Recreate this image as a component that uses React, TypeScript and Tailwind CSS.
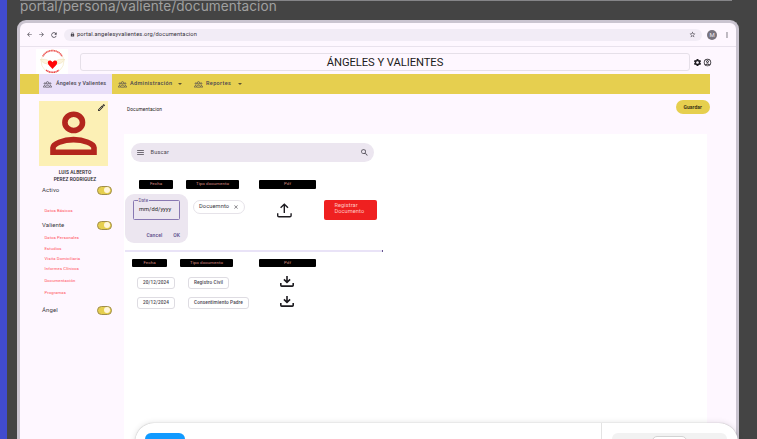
import type { ReactNode } from "react";
import {
  MdArrowBack,
  MdArrowForward,
  MdClose,
  MdLock,
  MdMenu,
  MdMoreVert,
  MdOutlineAccountCircle,
  MdOutlineEdit,
  MdRefresh,
  MdSearch,
  MdSettings,
  MdStarBorder,
} from "react-icons/md";

function Toggle() {
  return (
    <span className="flex h-[9px] w-[15px] items-center justify-end rounded-full border border-[#a08d4c] bg-[#e6cf4f] pr-px">
      <span className="h-[6px] w-[6px] rounded-full bg-[#fff6dc]" />
    </span>
  );
}

function Section({ label, className }: { label: string; className: string }) {
  return (
    <div className={`flex h-[10px] w-[70px] items-center justify-between text-[6px] tracking-[0.1px] text-[#3a383d] ${className}`}>
      <span>{label}</span>
      <Toggle />
    </div>
  );
}

function SideLink({ children, className }: { children: ReactNode; className: string }) {
  return (
    <a className={`ml-[2.5px] block h-[8px] text-[4.2px] leading-[8px] tracking-[0.11px] whitespace-nowrap text-[#ff4f58] ${className}`}>
      {children}
    </a>
  );
}

function HeadCell({ children, className }: { children: ReactNode; className: string }) {
  return (
    <div className={`flex h-[8.5px] shrink-0 items-center justify-center rounded-[1px] bg-black text-[4.4px] tracking-[0.08px] text-[#d98a80] ${className}`}>
      {children}
    </div>
  );
}

function Chip({ children, className }: { children: ReactNode; className: string }) {
  return (
    <div className={`flex h-[12px] shrink-0 items-center justify-center rounded-[3px] border border-[#dedce2] text-[4.7px] font-medium tracking-[0.11px] whitespace-nowrap text-[#49454f] ${className}`}>
      {children}
    </div>
  );
}

function GroupIcon({ className }: { className: string }) {
  return (
    <svg viewBox="0 0 18 14" className={`h-[7px] w-[9px] shrink-0 ${className}`} fill="none" stroke="#49454f" strokeWidth="1.4">
      <circle cx="9" cy="3.6" r="2.3" />
      <path d="M4.9 12.3v-1.6C4.9 9.2 7 8.3 9 8.3s4.1.9 4.1 2.4v1.6Z" />
      <circle cx="3.8" cy="5" r="1.5" />
      <circle cx="14.2" cy="5" r="1.5" />
      <path d="M3.6 12.3H1v-1.5C1 9.6 2.3 9 3.9 9M14.4 12.3H17v-1.5C17 9.6 15.7 9 14.1 9" />
    </svg>
  );
}

function Caret({ className }: { className: string }) {
  return (
    <svg viewBox="0 0 4 2" className={`h-[2px] w-[4px] shrink-0 ${className}`} fill="#5c532f">
      <path d="M0 0h4L2 2Z" />
    </svg>
  );
}

function DownloadIcon({ className }: { className: string }) {
  return (
    <svg viewBox="0 0 14 11" className={`h-[11px] w-[14px] shrink-0 ${className}`} fill="none" stroke="#1d1b20" strokeWidth="1.6">
      <path d="M7 0v6M3.9 3.4l3.1 2.9 3.1-2.9M.8 7v2.2q0 .9.9.9h10.6q.9 0 .9-.9V7" />
    </svg>
  );
}

function Logo() {
  return (
    <div className="ml-[16px] mt-[2px] h-[25px] w-[32px] bg-white">
      <svg viewBox="0 0 32 25" className="h-full w-full" fill="none">
        <circle cx="16.5" cy="12.5" r="11.3" stroke="#f4e9c5" strokeWidth=".7" />
        <path d="M6.8 7.4A11 11 0 0 1 26.2 7.4" stroke="#ed5255" strokeWidth="1.6" strokeDasharray="1.2 .45" />
        <path d="M10.1 21.2A11 11 0 0 0 22.9 21.2" stroke="#ed4248" strokeWidth="1.6" strokeDasharray="1.2 .4" />
        <path d="M15 12.6Q9 9 4 10.5Q7 15 13 15.5M18 12.6Q24 9 29 10.5Q26 15 20 15.5" fill="#fbf4df" stroke="#eedfb4" strokeWidth=".5" />
        <path d="M16.5 20C14.5 17.8 11.8 16 11.8 13.8C11.8 11 15.2 10.9 16.5 13.3C17.8 10.9 21.2 11 21.2 13.8C21.2 16 18.5 17.8 16.5 20Z" fill="#ff0508" />
      </svg>
    </div>
  );
}

function BrowserBar() {
  return (
    <div className="flex h-[24px] shrink-0 items-center border-b border-[#e9e2ed] text-[#49454f]">
      <MdArrowBack className="ml-[6px] h-[7px] w-[7px]" />
      <MdArrowForward className="ml-[5px] h-[7px] w-[7px]" />
      <MdRefresh className="ml-[5px] h-[8px] w-[8px]" />
      <div className="ml-[6px] flex h-[12px] w-[638px] items-center rounded-full bg-[#f2ecf6]">
        <MdLock className="ml-[5.5px] h-[5px] w-[5px]" />
        <span className="ml-[2.5px] text-[5.7px] tracking-[0.17px] whitespace-nowrap text-[#333036]">portal.angelesyvalientes.org/documentacion</span>
        <MdStarBorder className="mr-[6px] ml-auto h-[7px] w-[7px]" />
      </div>
      <span className="ml-[5px] flex h-[10px] w-[10px] items-center justify-center rounded-full bg-[#79747e] text-[6px] text-[#eee8f2]">M</span>
      <MdMoreVert className="ml-[10px] h-[8px] w-[8px] -translate-x-[4px]" />
    </div>
  );
}

function Header() {
  return (
    <header className="flex h-[27px] shrink-0">
      <Logo />
      <div className="mt-[6px] ml-[12px] flex h-[18px] w-[610px] items-center justify-center rounded-[3px] border border-[#e6e0e9] pt-px text-[11.2px] leading-none text-[#1d1b20]">
        <span className="-tracking-[0.05px]">ÁNGELES Y VALIENTES</span>
      </div>
      <div className="mt-[10.5px] ml-[2.5px] flex gap-[1.5px] text-[#1d1b20]">
        <MdSettings className="h-[9px] w-[9px]" />
        <MdOutlineAccountCircle className="h-[9px] w-[9px]" />
      </div>
    </header>
  );
}

function Nav() {
  return (
    <nav className="flex h-[20px] w-[690px] shrink-0 items-center bg-[#e6cf4f] pl-[19px] text-[5.5px] font-medium tracking-[0.36px] whitespace-nowrap text-[#49454f]">
      <div className="flex h-full w-[73px] items-center bg-[#e8def8]">
        <GroupIcon className="ml-[4px]" />
        <span className="ml-[4px] text-[5.4px] tracking-[0.16px]">Ángeles y Valientes</span>
      </div>
      <GroupIcon className="ml-[5.5px]" />
      <span className="ml-[3.5px] w-[46px]">Administración</span>
      <Caret className="ml-[1.5px]" />
      <GroupIcon className="ml-[12px]" />
      <span className="ml-[3.5px] w-[30px]">Reportes</span>
      <Caret className="ml-[1.5px]" />
    </nav>
  );
}

function Sidebar() {
  return (
    <aside className="w-[104px] shrink-0 pt-[7px] pl-[19px]">
      <div className="relative h-[65px] w-[69px] bg-[#fcf0b5]">
        <svg viewBox="0 0 69 65" className="h-full w-full" fill="none" stroke="#b3261e" strokeWidth="5.6">
          <ellipse cx="34.7" cy="21.4" rx="8.8" ry="8.1" />
          <path d="M14 51.2V46.5C14 43 24 38.6 34.5 38.6S55 43 55 46.5V51.2Z" />
        </svg>
        <MdOutlineEdit className="absolute top-[2px] right-[2px] h-[9px] w-[9px] text-[#1d1b20]" />
      </div>
      <p className="mt-[3px] w-[72px] text-center text-[4.8px] leading-[7px] font-semibold tracking-[0.07px] text-[#333036]">
        LUIS ALBERTO
        <br />
        PEREZ RODRIGUEZ
      </p>
      <div className="pl-[3px]">
        <Section label="Activo" className="mt-[2px]" />
        <SideLink className="mt-[12px]">Datos Básicos</SideLink>
        <Section label="Valiente" className="mt-[5px]" />
        <SideLink className="mt-[4px]">Datos Personales</SideLink>
        <SideLink className="mt-[3px]">Estudios</SideLink>
        <SideLink className="mt-[2px]">Visita Domiciliaria</SideLink>
        <SideLink className="mt-[2px]">Informes Clínicos</SideLink>
        <SideLink className="mt-[4px]">Documentación</SideLink>
        <SideLink className="mt-[4px]">Programas</SideLink>
        <Section label="Ángel" className="mt-[8px]" />
      </div>
    </aside>
  );
}

function DateCard() {
  return (
    <div className="ml-px h-[49px] w-[63px] shrink-0 rounded-[9px] bg-[#ece6f0] pt-[6px] pl-[8px]">
      <div className="relative flex h-[20px] w-[47px] items-center rounded-[1.5px] border border-[#8878b2] pl-[5px] text-[5.7px] leading-none text-[#1d1b20]">
        <span className="absolute -top-[3px] left-[3.5px] bg-[#ece6f0] px-[1px] text-[4.5px] leading-[5px] tracking-[0.1px] text-[#65558f]">Date</span>
        <span className="tracking-[0.05px]">mm/dd/yyyy</span>
      </div>
      <div className="mt-[11px] flex justify-end pr-[8px] text-[5px] leading-[8px] font-semibold tracking-[0.06px] text-[#65558f]">
        <span className="mr-[11px]">Cancel</span>
        <span>OK</span>
      </div>
    </div>
  );
}

function Documents() {
  return (
    <section className="flex w-[583px] flex-1 flex-col bg-white">
      <div className="mt-[9px] ml-[7px] flex h-[19px] w-[243px] shrink-0 items-center rounded-full bg-[#ece6f0] text-[#49454f]">
        <MdMenu className="ml-[5px] h-[9px] w-[9px]" />
        <span className="ml-[5.5px] text-[5.6px] tracking-[0.2px]">Buscar</span>
        <MdSearch className="mr-[5px] ml-auto h-[9px] w-[9px]" />
      </div>

      <div className="mt-[18px] flex h-[8px] shrink-0 pl-[15px]">
        <HeadCell className="w-[34px]">Fecha</HeadCell>
        <HeadCell className="ml-[13px] w-[53px]">Tipo documento</HeadCell>
        <HeadCell className="ml-[20px] w-[57px]">Pdf</HeadCell>
      </div>

      <div className="mt-[6px] flex h-[49px] shrink-0">
        <DateCard />
        <div className="mt-[6px] ml-[5px] flex h-[14px] w-[52px] items-center rounded-full border border-[#e6e3e9] pl-[5px] text-[5.7px] text-[#3a373e]">
          <span className="w-[34px] tracking-[0.1px]">Docuemnto</span>
          <MdClose className="h-[6px] w-[6px] shrink-0" />
        </div>
        <svg viewBox="0 0 15 15" className="mt-[9px] ml-[32px] h-[15px] w-[15px] shrink-0" fill="none" stroke="#1d1b20" strokeWidth="1.4">
          <path d="M7.3 10V1.2M3.6 4.8L7.3 1.2L11 4.8M.7 10.2v2.4q0 1.2 1.2 1.2h11q1.2 0 1.2-1.2v-2.4" />
        </svg>
        <button className="mt-[6px] ml-[32px] h-[19.5px] w-[53px] rounded-[2px] bg-[#ef2020] pt-[2px] pl-[10.5px] text-left align-top text-[5.6px] leading-[5.5px] tracking-[0.1px] text-[#ffc7c2]">
          <span className="block h-[15.5px]">
            Registrar
            <br />
            Documento
          </span>
        </button>
      </div>

      <div className="mt-[7px] ml-px flex h-[2px] w-[258px] shrink-0 justify-end bg-[#e9e3f7]">
        <span className="h-[2px] w-[1.5px] bg-[#65558f]" />
      </div>

      <div className="mt-[6.5px] flex h-[8.5px] shrink-0 pl-[8px]">
        <HeadCell className="w-[35px]">Fecha</HeadCell>
        <HeadCell className="ml-[13px] w-[53px]">Tipo documento</HeadCell>
        <HeadCell className="ml-[26px] w-[57px]">Pdf</HeadCell>
      </div>

      <div className="mt-[10px] flex h-[12px] shrink-0 pl-[13px]">
        <Chip className="w-[38px]">20/12/2024</Chip>
        <Chip className="ml-[13px] w-[41px]">Registro Civil</Chip>
        <DownloadIcon className="-mt-[1px] ml-[50.5px]" />
      </div>
      <div className="mt-[8px] flex h-[12px] shrink-0 pl-[13px]">
        <Chip className="w-[38px]">20/12/2024</Chip>
        <Chip className="ml-[13px] w-[61px]">Consentimiento Padre</Chip>
        <DownloadIcon className="-mt-[1px] ml-[31px]" />
      </div>
    </section>
  );
}

export default function App() {
  return (
    <div className="relative flex h-[439px] w-[757px] overflow-hidden bg-[#444444] font-['Roboto','Liberation_Sans',sans-serif] leading-none">
      <div className="w-[7px] shrink-0 bg-[#414bcf]" />
      <div className="flex flex-col pl-[10px]">
        <div className="ml-[3px] h-[20px] w-[712px] shrink-0 border-t border-[#858588]">
          <h1 className="font-['Inter','Liberation_Sans',sans-serif] text-[13.6px] leading-[10px] whitespace-nowrap text-[#a0a0a0]">
            <span className="tracking-[0.08px]">portal/persona/valiente/documentacion</span>
          </h1>
        </div>
        <div className="flex h-[440px] w-[722px] flex-col overflow-hidden rounded-t-[9px] border-[3px] border-b-0 border-[#cac4d0] bg-[#fef7ff]">
          <BrowserBar />
          <Header />
          <Nav />
          <div className="flex min-h-0 flex-1">
            <Sidebar />
            <main className="flex flex-1 flex-col">
              <div className="flex h-[40px] w-[586px] shrink-0 items-start justify-between pt-[6px] pl-[3px]">
                <h2 className="mt-[7px] text-[4.8px] leading-[6px] tracking-[0.11px] text-[#1d1b20]">Documentacion</h2>
                <button className="h-[14px] w-[34.5px] rounded-full bg-[#e6cf4f] text-[5px] font-bold tracking-[0.06px] text-[#3f3816]">Guardar</button>
              </div>
              <Documents />
            </main>
          </div>
        </div>
      </div>

      <div className="absolute top-[423px] left-[134.5px] flex h-[50px] w-[603px] rounded-[19px] bg-white shadow-[0_0_6px_rgba(0,0,0,0.12),0_0_1px_rgba(0,0,0,0.35)]">
        <div className="w-[467px] border-r border-[#e3e3e3] pt-[10px] pl-[10.5px]">
          <div className="h-[34px] w-[40px] rounded-[6px] bg-[#119aff]" />
        </div>
        <div className="pt-[10px] pl-[10.5px]">
          <div className="flex h-[34px] w-[115px] justify-center rounded-[6px] bg-[#f2f2f2] pt-[2.5px]">
            <div className="h-[28px] w-[35px] rounded-[5px] border border-[#d3d3d3] bg-white" />
          </div>
        </div>
      </div>
    </div>
  );
}
